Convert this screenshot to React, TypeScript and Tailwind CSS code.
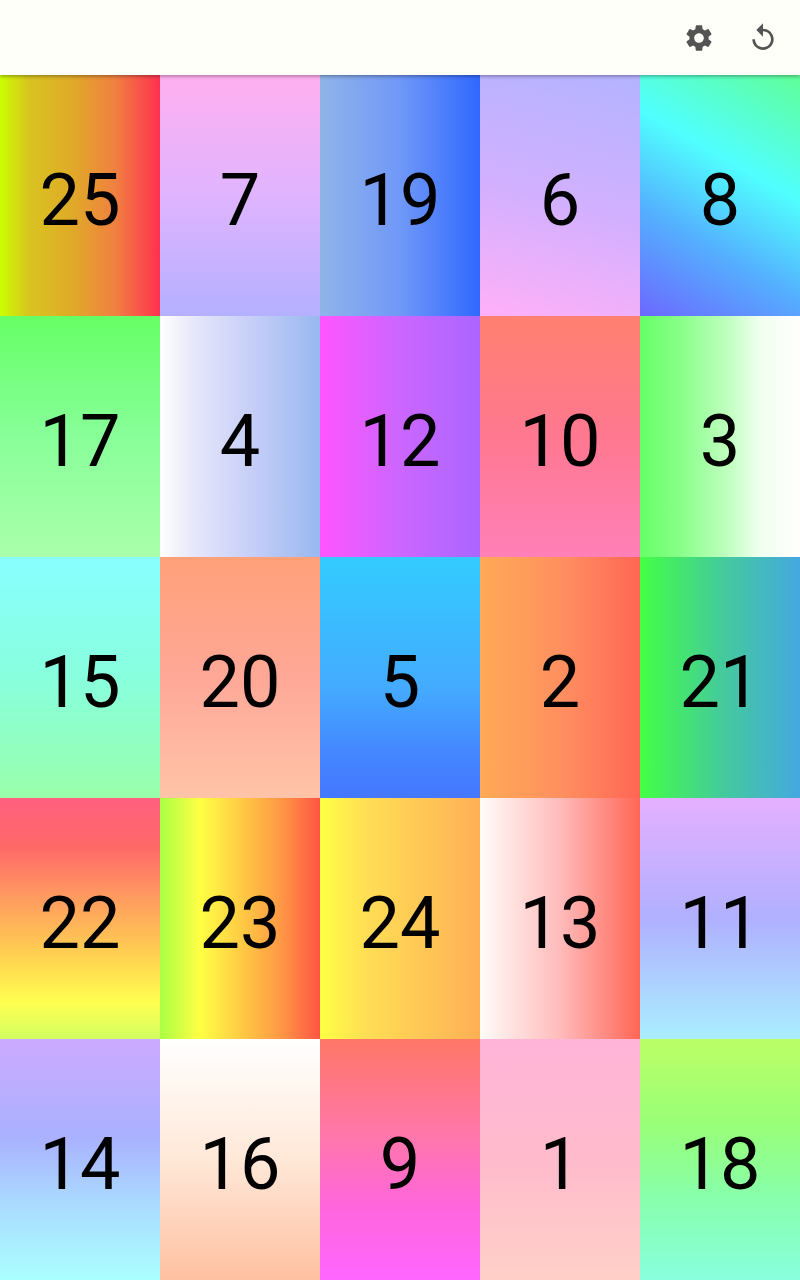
import React from 'react';
import { MdSettings, MdReplay } from 'react-icons/md';

const tiles: { n: number; bg: string }[] = [
  { n: 25, bg: 'bg-[linear-gradient(to_right,#ccff00_0%,#d8c420_18%,#e0aa28_45%,#f08040_72%,#ff3050_100%)]' },
  { n: 7, bg: 'bg-[linear-gradient(to_bottom,#ffb0f0_0%,#e0b4ff_50%,#b4b0ff_100%)]' },
  { n: 19, bg: 'bg-[linear-gradient(to_right,#90b4e8_0%,#7098f8_50%,#3068ff_100%)]' },
  { n: 6, bg: 'bg-[linear-gradient(195deg,#b4b4ff_0%,#d0b0ff_50%,#ffb0f8_100%)]' },
  { n: 8, bg: 'bg-[linear-gradient(30deg,#6c68ff_0%,#54b0ff_33%,#50ffff_62%,#60ff98_100%)]' },
  { n: 17, bg: 'bg-[linear-gradient(to_bottom,#66ff66_0%,#88ff99_50%,#aaffaa_100%)]' },
  { n: 4, bg: 'bg-[linear-gradient(to_right,#ffffff_0%,#e8e8fa_20%,#c8d0f8_55%,#98b8f0_100%)]' },
  { n: 12, bg: 'bg-[linear-gradient(to_right,#ff55ff_0%,#cc66ff_50%,#aa66ff_100%)]' },
  { n: 10, bg: 'bg-[linear-gradient(to_bottom,#ff8070_0%,#ff7890_50%,#ff80b8_100%)]' },
  { n: 3, bg: 'bg-[linear-gradient(to_right,#66ff66_0%,#88ff88_25%,#c0ffc0_55%,#f0fff0_75%,#ffffff_100%)]' },
  { n: 15, bg: 'bg-[linear-gradient(to_bottom,#88ffff_0%,#88ffdd_50%,#99ffaa_100%)]' },
  { n: 20, bg: 'bg-[linear-gradient(to_bottom,#ffa078_0%,#ffa898_50%,#ffc4a8_100%)]' },
  { n: 5, bg: 'bg-[linear-gradient(to_bottom,#33ccff_0%,#44aaff_55%,#4488ff_80%,#4477ff_100%)]' },
  { n: 2, bg: 'bg-[linear-gradient(to_right,#ffaa55_0%,#ff9060_50%,#ff6655_100%)]' },
  { n: 21, bg: 'bg-[linear-gradient(to_right,#44ff44_0%,#44cc99_50%,#44a8e0_100%)]' },
  { n: 22, bg: 'bg-[linear-gradient(to_bottom,#ff6080_0%,#ff6868_20%,#ff9860_40%,#ffd050_65%,#ffff50_85%,#d0ff60_100%)]' },
  { n: 23, bg: 'bg-[linear-gradient(to_right,#aaff44_0%,#ffff44_25%,#ffcc44_50%,#ff9944_75%,#ff5544_100%)]' },
  { n: 24, bg: 'bg-[linear-gradient(to_right,#ffff44_0%,#ffdd55_30%,#ffb055_100%)]' },
  { n: 13, bg: 'bg-[linear-gradient(to_right,#fffcf8_0%,#ffbbbb_50%,#ff6655_100%)]' },
  { n: 11, bg: 'bg-[linear-gradient(to_bottom,#e4b0ff_0%,#b0b0ff_50%,#aaeeff_100%)]' },
  { n: 14, bg: 'bg-[linear-gradient(to_bottom,#ccaaff_0%,#aab0ff_40%,#aaddff_70%,#aaffff_100%)]' },
  { n: 16, bg: 'bg-[linear-gradient(to_bottom,#ffffff_0%,#ffe8d8_50%,#ffc0a0_100%)]' },
  { n: 9, bg: 'bg-[linear-gradient(to_bottom,#ff7766_0%,#ff77aa_40%,#ff66dd_70%,#ff66ff_100%)]' },
  { n: 1, bg: 'bg-[linear-gradient(to_bottom,#ffb4d8_0%,#ffbbcc_50%,#ffd0c8_100%)]' },
  { n: 18, bg: 'bg-[linear-gradient(to_bottom,#bbff66_0%,#99ff77_35%,#88ffaa_65%,#88ffdd_100%)]' },
];

export default function App() {
  return (
    <div className="w-[800px] h-[1280px] flex flex-col bg-[#fffffa] font-['Roboto',sans-serif]">
      <header className="relative z-10 h-[75px] flex items-center justify-end pr-[5px] bg-[#fffffa] shadow-[0_1px_4px_rgba(0,0,0,0.4)]">
        <button className="w-16 h-[75px] flex items-center justify-center text-[#545454]">
          <MdSettings size={32} />
        </button>
        <button className="w-16 h-[75px] flex items-center justify-center text-[#545454]">
          <MdReplay size={32} />
        </button>
      </header>
      <main className="grid grid-cols-5 grid-rows-5 flex-1">
        {tiles.map((t) => (
          <div key={t.n} className={`flex items-center justify-center pt-[11px] text-[72px] leading-none text-black ${t.bg}`}>
            {t.n}
          </div>
        ))}
      </main>
    </div>
  );
}
